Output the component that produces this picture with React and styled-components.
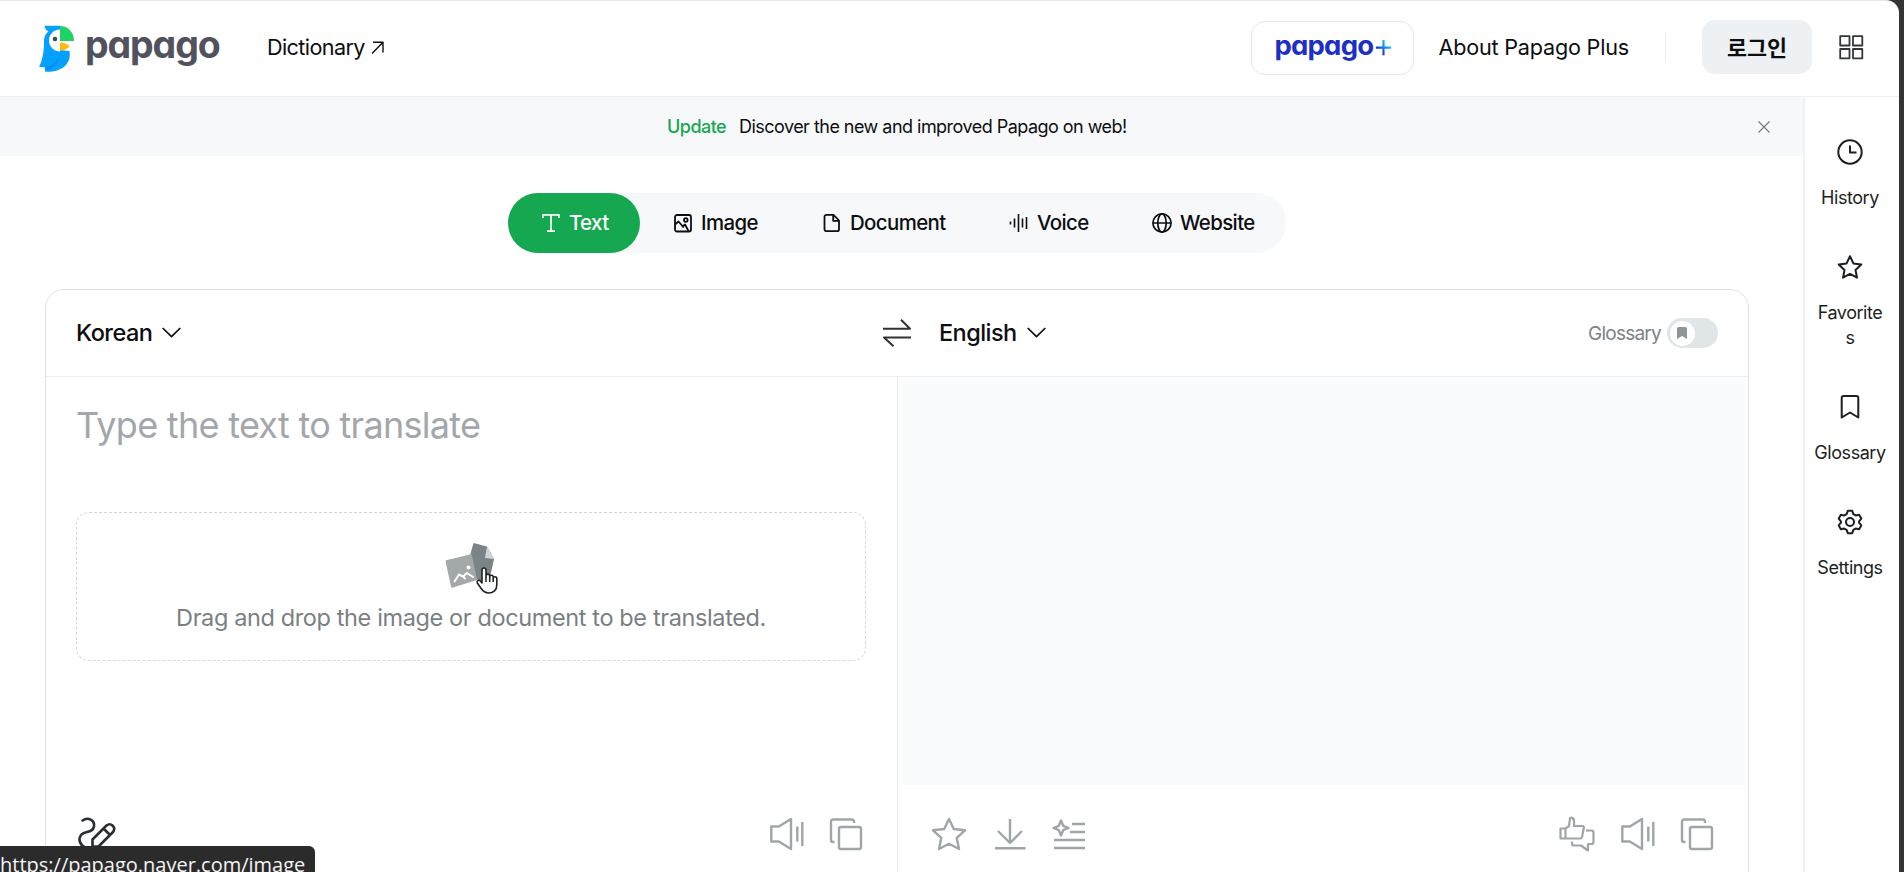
import React from "react";
import styled, { createGlobalStyle, css } from "styled-components";

const GlobalStyle = createGlobalStyle`
	* {
		box-sizing: border-box;
	}
	body {
		margin: 0;
		overflow: hidden;
		background: #343434;
		color: #0c0e10;
		font-family: Inter, "Noto Sans CJK KR", sans-serif;
	}
	button {
		font: inherit;
		color: inherit;
		border: 0;
		padding: 0;
		background: none;
		cursor: pointer;
	}
	svg {
		display: block;
		flex: none;
		overflow: visible;
	}
`;

const Window = styled.div`
	width: 1899px;
	height: 872px;
	overflow: hidden;
	display: flex;
	flex-direction: column;
	background: #fff;
	border-top: 1px solid #e6e6e6;
	border-radius: 0 13px 0 0;
`;

const Header = styled.header`
	flex: none;
	height: 96px;
	display: flex;
	align-items: center;
	padding: 0 35px 3px 39px;
	border-bottom: 1px solid #eff0f2;
`;

const Logo = styled.a`
	display: flex;
	align-items: center;
	width: 228px;
	gap: 11px;
	padding-top: 2px;
`;

const Wordmark = styled.span`
	font-weight: 700;
	font-size: ${props => props.size}px;
	letter-spacing: ${props => props.spacing}px;
	line-height: 1;
	color: ${props => props.color};
	font-feature-settings: "cv11";
	white-space: nowrap;
	margin-top: ${props => props.shift || 0}px;
`;

const NavLink = styled.a`
	display: flex;
	align-items: center;
	gap: 6px;
	font-size: 21.6px;
	letter-spacing: ${props => props.spacing}px;
	white-space: nowrap;
`;

const HeaderRight = styled.div`
	margin-left: auto;
	display: flex;
	align-items: center;
`;

const PlusButton = styled.button`
	width: 163px;
	height: 54px;
	margin: 2px 24px 0 0;
	display: flex;
	align-items: center;
	padding-left: 22px;
	gap: 2px;
	border: 1px solid #e3e5e8;
	border-radius: 14px;
`;

const Divider = styled.span`
	width: 1px;
	height: 31px;
	margin: 0 36px;
	background: #eceef0;
`;

const LoginButton = styled.button`
	width: 110px;
	height: 54px;
	margin-right: 27px;
	padding-bottom: 2px;
	border-radius: 13px;
	background: #eef1f4;
	font-family: "Noto Sans CJK KR", sans-serif;
	font-weight: 700;
	font-size: 21.8px;
`;

const Body = styled.div`
	flex: 1;
	min-height: 0;
	display: flex;
`;

const Main = styled.main`
	width: 1803px;
	display: flex;
	flex-direction: column;
`;

const Banner = styled.div`
	flex: none;
	height: 59px;
	display: flex;
	align-items: center;
	padding: 0 33px 0 667px;
	background: #f6f8fa;
	font-size: 18px;
	letter-spacing: -0.53px;
	white-space: nowrap;
`;

const Update = styled.strong`
	font-weight: 500;
	width: 72px;
	color: #18a651;
`;

const CloseButton = styled.button`
	margin-left: auto;
`;

const Tabs = styled.nav`
	flex: none;
	align-self: flex-start;
	margin: 37px 0 36px 508px;
	height: 60px;
	display: flex;
	border-radius: 30px;
	background: #f6f8fa;
`;

const Tab = styled.button`
	width: ${props => props.width}px;
	display: flex;
	align-items: center;
	padding: 0 0 1px 33px;
	gap: 8px;
	border-radius: 30px;
	font-weight: 500;
	font-size: 20.4px;
	letter-spacing: -0.6px;
	white-space: nowrap;
	${props =>
		props.active &&
		css`
			background: #15a851;
			color: #fff;
		`}
`;

const Card = styled.section`
	flex: none;
	width: 1704px;
	height: 620px;
	margin-left: 45px;
	border: 1px solid #e0e3e5;
	border-radius: 19px;
	overflow: hidden;
`;

const LangBar = styled.div`
	height: 87px;
	display: flex;
	align-items: center;
	padding: 0 30px;
	border-bottom: 1px solid #eceeef;
`;

const LangButton = styled.button`
	display: flex;
	align-items: center;
	width: ${props => props.width}px;
	padding-bottom: 1px;
	gap: 10px;
	font-weight: 500;
	font-size: 23.5px;
	letter-spacing: -0.55px;
`;

const SwapButton = styled.button`
	width: 56px;
`;

const GlossaryLabel = styled.span`
	margin-left: auto;
	margin-right: 6px;
	font-size: 19px;
	letter-spacing: -0.75px;
	color: #7c8287;
`;

const Toggle = styled.button`
	width: 51px;
	height: 30px;
	padding: 2.5px;
	border-radius: 15px;
	background: #e0e5e8;
`;

const Knob = styled.span`
	width: 25px;
	height: 25px;
	display: flex;
	align-items: center;
	justify-content: center;
	border-radius: 50%;
	background: #fff;
`;

const Panes = styled.div`
	display: flex;
	height: 532px;
`;

const Pane = styled.div`
	width: 851px;
	display: flex;
	flex-direction: column;
	border-left: ${props => (props.target ? "1px solid #e8eaec" : "0")};
`;

const PaneText = styled.div`
	height: 408px;
	margin: ${props => (props.target ? "0 3px" : "0")};
	padding: ${props => (props.target ? "0" : "24px 31px 0 30px")};
	background: ${props => (props.target ? "#fafbfd" : "#fff")};
`;

const Placeholder = styled.p`
	margin: 0 0 63px;
	font-size: 36px;
	line-height: 48px;
	letter-spacing: -0.71px;
	color: #a1a7aa;
	white-space: nowrap;
`;

const DropZone = styled.div`
	width: 790px;
	height: 149px;
	display: flex;
	flex-direction: column;
	align-items: center;
	padding-top: 30px;
	border: 1px dashed #d2d6d9;
	border-radius: 13px;
`;

const DropIcon = styled.div`
	position: relative;
	width: 50px;
	height: 46px;
	margin-right: 3px;
`;

const Pointer = styled.div`
	position: absolute;
	left: 31px;
	top: 24px;
`;

const DropText = styled.p`
	margin: 13px 0 0;
	font-size: 23.5px;
	line-height: 32px;
	letter-spacing: -0.38px;
	color: #797f83;
	white-space: nowrap;
`;

const Tools = styled.div`
	height: 98px;
	display: flex;
	gap: 25.5px;
	padding: 32px 35px 0 ${props => (props.target ? 33 : 30)}px;
	color: #a0a5a8;
`;

const Spacer = styled.span`
	flex: 1;
`;

const Sidebar = styled.aside`
	width: 96px;
	display: flex;
	flex-direction: column;
	align-items: center;
	gap: 41.5px;
	padding-top: 40px;
	padding-right: 4px;
	border-left: 2px solid #f0f1f3;
`;

const SideItem = styled.button`
	width: 72px;
	display: flex;
	flex-direction: column;
	align-items: center;
	gap: 18px;
	padding-bottom: 0.5px;
	font-size: 18px;
	line-height: 25px;
	letter-spacing: -0.45px;
	word-break: break-all;
	color: #1c1f22;
`;

const StatusBar = styled.div`
	position: fixed;
	left: 0;
	bottom: -8px;
	width: 315px;
	height: 34px;
	border-radius: 0 6px 0 0;
	background: #2b2b2b;
	color: #f4f4f4;
	font-family: "Open Sans", "Noto Sans", sans-serif;
	font-size: 20px;
	line-height: 38px;
	white-space: nowrap;
`;

const Icon = ({ w, h = w, stroke = 2, color = "currentColor", round, children }) => (
	<svg
		width={w}
		height={h}
		viewBox={`0 0 ${w} ${h}`}
		fill="none"
		stroke={color}
		strokeWidth={stroke}
		strokeLinecap={round ? "round" : "butt"}
		strokeLinejoin="round"
	>
		{children}
	</svg>
);

const Parrot = () => (
	<svg width="35" height="47" viewBox="0 0 35 47">
		<path
			fill="#05a0fb"
			d="M5.5.8H21V25l9.500 1C31.500 32 30 37 26 41c-5 4.400-11 6-20 5.700L6.300 42.200.2 42C3.500 34 5 27 5 17 5 11 7 8.500 9.500 6.500 7 5.500 6 3.500 5.500.8Z"
		/>
		<path fill="#078cf5" d="M6.300 42.200C13 41 18 37 20 32c-1 7-6 12-14 13Z" />
		<path fill="#fff" d="M21 4.500A11 11 0 0 0 21 26.500Z" />
		<circle cx="16" cy="14" r="2.300" fill="#454554" />
		<path fill="#1fd265" d="M21 1C29 1 35 7 35 16H21Z" />
		<path fill="#fff" d="M21 16h14l-4.500 5.500H21Z" />
		<path fill="#ffb90f" d="M21 17.500c4 0 8 1.500 9.500 4-2 2.700-6 4-9.500 4Z" />
	</svg>
);

const Chevron = () => (
	<Icon w={19} h={11} stroke={1.7}>
		<path d="M.7 1 9.500 9.700 18.300 1" />
	</Icon>
);

const Speaker = () => (
	<Icon w={35} h={34} stroke={2.4}>
		<path d="M1.300 9.500h7.500L21 2v30L8.800 24.500H1.300ZM27.300 9.500v15M32.300 5v24" />
	</Icon>
);

const Copy = () => (
	<Icon w={32} h={34} stroke={2.4}>
		<path d="M24 6V4.500A2 2 0 0 0 22 2.500H3a2 2 0 0 0-2 2V23a2 2 0 0 0 2 2h1.500" />
		<rect x="9" y="10" width="22" height="22" rx="2" />
	</Icon>
);

const tabs = [
	{
		label: "Text",
		width: 132,
		icon: (
			<Icon w={20} stroke={1.7}>
				<path d="M2 5V1.800h16V5M10 1.800v16.400M6 18.200h8" />
			</Icon>
		)
	},
	{
		label: "Image",
		width: 149,
		icon: (
			<Icon w={20} stroke={1.8}>
				<rect x="2" y="2" width="16" height="16.500" rx="2" />
				<circle cx="12.800" cy="7" r="1.800" />
				<path d="M2 11.500 5.500 8.500l5.300 6M9 14l3-2.500 3.500 6.500" />
			</Icon>
		)
	},
	{
		label: "Document",
		width: 187,
		icon: (
			<Icon w={20} stroke={1.8}>
				<path d="M4 1.800h7.500L17 7.500V16.200a2 2 0 0 1-2 2H4.500a2 2 0 0 1-2-2V3.800a2 2 0 0 1 2-2M11.200 2v5.800H17" />
			</Icon>
		)
	},
	{
		label: "Voice",
		width: 143,
		icon: (
			<Icon w={20} stroke={1.6}>
				<path d="M1.500 8.500v3M5.500 5.500v9M9.500 1v18M13.500 5.500v9M17.500 4v12" />
			</Icon>
		)
	},
	{
		label: "Website",
		width: 167,
		icon: (
			<Icon w={20} stroke={1.7}>
				<circle cx="10" cy="10" r="9.100" />
				<ellipse cx="10" cy="10" rx="4.200" ry="9.100" />
				<path d="M1 10h18" />
			</Icon>
		)
	}
];

const sideItems = [
	{
		label: "History",
		icon: (
			<Icon w={30}>
				<circle cx="15" cy="15" r="11.700" />
				<path d="M15 8.500V15.500H21.500" />
			</Icon>
		)
	},
	{
		label: "Favorites",
		icon: (
			<Icon w={30}>
				<path d="M15 4.200 18.400 11.400 26.300 12.400 20.500 17.900 22 25.700 15 21.900 8 25.700 9.500 17.900 3.700 12.400 11.600 11.400Z" />
			</Icon>
		)
	},
	{
		label: "Glossary",
		icon: (
			<Icon w={30}>
				<path d="M6.700 25.500V6a2 2 0 0 1 2-2H21.300a2 2 0 0 1 2 2V25.500L15 20.500Z" />
			</Icon>
		)
	},
	{
		label: "Settings",
		icon: (
			<Icon w={30}>
				<path d="M12.800 3.800h4.400l1.200 3.300 2.300 1.300 3.400-.6 2.200 3.800-2.200 2.700v1.400l2.200 2.700-2.200 3.800-3.400-.6-2.300 1.300-1.200 3.300h-4.400l-1.200-3.300-2.300-1.300-3.400.6-2.200-3.800 2.200-2.700v-1.400l-2.200-2.700 2.200-3.800 3.400.6 2.300-1.300Z" />
				<circle cx="15" cy="15" r="4" />
			</Icon>
		)
	}
];

const App = () => {
	return (
		<>
			<GlobalStyle />
			<Window>
				<Header>
					<Logo>
						<Parrot />
						<Wordmark size={37.5} spacing={-1.1} color="#52515e" shift={-7}>
							papago
						</Wordmark>
					</Logo>
					<NavLink spacing={-0.6}>
						Dictionary
						<Icon w={13} stroke={1.4}>
							<path d="M1 12.500 12 1.200M2 1.200h10v10.300" />
						</Icon>
					</NavLink>
					<HeaderRight>
						<PlusButton>
							<Wordmark size={27.5} spacing={-0.8} color="#1c2fc6" shift={-4}>
								papago
							</Wordmark>
							<svg width="17" height="17" viewBox="0 0 17 19">
								<defs>
									<linearGradient id="plus" x1="0" y1="1" x2="1" y2="0">
										<stop offset="0.250" stopColor="#1c2fd0" />
										<stop offset="0.700" stopColor="#12b4fa" />
									</linearGradient>
								</defs>
								<path fill="url(#plus)" d="M7.300 0h2.400v7.300H17v2.400H9.700V17H7.300V9.700H0V7.300h7.300Z" />
							</svg>
						</PlusButton>
						<NavLink spacing={-0.2}>About Papago Plus</NavLink>
						<Divider />
						<LoginButton>로그인</LoginButton>
						<Icon w={25} stroke={1.8} color="#33373a">
							<rect x="1.200" y="1.200" width="9.300" height="9.300" />
							<rect x="14" y="1.200" width="9.300" height="9.300" />
							<rect x="1.200" y="14" width="9.300" height="9.300" />
							<rect x="14" y="14" width="9.300" height="9.300" />
						</Icon>
					</HeaderRight>
				</Header>
				<Body>
					<Main>
						<Banner>
							<Update>Update</Update>
							<span>Discover the new and improved Papago on web!</span>
							<CloseButton>
								<Icon w={12} stroke={1.2} color="#777c80">
									<path d="M.5.5l11 11M11.500.5l-11 11" />
								</Icon>
							</CloseButton>
						</Banner>
						<Tabs>
							{tabs.map((tab, i) => (
								<Tab key={tab.label} width={tab.width} active={i === 0}>
									{tab.icon}
									{tab.label}
								</Tab>
							))}
						</Tabs>
						<Card>
							<LangBar>
								<LangButton width={807}>
									Korean
									<Chevron />
								</LangButton>
								<SwapButton>
									<Icon w={28} h={28} color="#303335">
										<path d="M0 9.700h27L18 .7M28 18.500H1l9.500 8.800" />
									</Icon>
								</SwapButton>
								<LangButton width={150}>
									English
									<Chevron />
								</LangButton>
								<GlossaryLabel>Glossary</GlossaryLabel>
								<Toggle>
									<Knob>
										<svg width="10" height="12" viewBox="0 0 10 12">
											<path fill="#8f9699" d="M1.500 0h7A1.500 1.500 0 0 1 10 1.500V12L5 9 0 12V1.500A1.500 1.500 0 0 1 1.500 0Z" />
										</svg>
									</Knob>
								</Toggle>
							</LangBar>
							<Panes>
								<Pane>
									<PaneText>
										<Placeholder>Type the text to translate</Placeholder>
										<DropZone>
											<DropIcon>
												<svg width="50" height="46" viewBox="0 0 50 46">
													<path fill="#7b8386" d="M28.500 0 42 3.500 49 16 44 39 22 34 24 16Z" />
													<path fill="#d0d4d6" d="M42 3.500 49 16 40 15Z" />
													<path fill="#a3a8aa" d="M2 17 25 11.500a1.500 1.500 0 0 1 2 1L32 37 8 44.500a1.500 1.500 0 0 1-2-1L.7 19a1.500 1.500 0 0 1 1.300-2Z" />
													<path
														d="M9.500 38.500 14 31.500l4 2 4-3.500 6 4M17.500 33l2.500 2.500"
														fill="none"
														stroke="#fff"
														strokeWidth="2"
														strokeLinecap="round"
													/>
													<circle cx="23.500" cy="24.500" r="2" fill="#fff" />
												</svg>
												<Pointer>
													<svg width="22" height="27" viewBox="0 0 22 27">
														<path
															d="M6 16V3a2 2 0 0 1 4 0v7.500V9a1.800 1.800 0 0 1 3.700 0v2-1a1.700 1.700 0 0 1 3.500 0v2-.5a1.700 1.700 0 0 1 3.600 0V18c0 5-3.500 8-8 8-4 0-6-2-8-5L1.300 16c-1-2 1.300-3.800 2.900-2.200Z"
															fill="#fff"
															stroke="#1f2326"
															strokeWidth="1.600"
															strokeLinejoin="round"
														/>
														<path d="M10 10v5M13.700 11v4M17.200 12v3" stroke="#1f2326" strokeWidth="1.500" />
													</svg>
												</Pointer>
											</DropIcon>
											<DropText>Drag and drop the image or document to be translated.</DropText>
										</DropZone>
									</PaneText>
									<Tools>
										<Icon w={40} h={34} stroke={2.6} color="#2b2e31" round>
											<path d="M6.500 3.500C12-.5 19 3 18 9.500 17 16 9 14 5.500 17.500 1.500 22 4 28 9 30.500" />
											<path d="M16.500 29.500V22.500L30.500 8.500c4.500-3.500 10 2 6.500 6.500L22.500 29.500ZM27.500 11.500l6.500 6.500" />
										</Icon>
										<Spacer />
										<Speaker />
										<Copy />
									</Tools>
								</Pane>
								<Pane target>
									<PaneText target />
									<Tools target>
										<Icon w={36} h={34} stroke={2.4}>
											<path d="M18 2 22.800 12 34 13.300 25.700 20.800 28 32 18 26.800 8 32 10.300 20.800 2 13.300 13.200 12Z" />
										</Icon>
										<Icon w={34} h={34} stroke={2.4}>
											<path d="M17 2v24M5 14 17 26 29 14M2 31.300h30.500" />
										</Icon>
										<Icon w={34} h={34} stroke={2.4}>
											<path d="M20 7h13M18 15h15M2 23h31M2 31h31" />
											<path d="M9 3.500 11.200 8.800 16.500 11 11.200 13.200 9 18.500 6.800 13.200 1.500 11 6.800 8.800Z" />
										</Icon>
										<Spacer />
										<Icon w={36} h={34} stroke={2.2}>
											<path d="M1.500 11.500h5V21.500h-5ZM6.500 11.500 10 9 11 1.500C11 0 15 .5 15 3.500V9h8.500a1.500 1.500 0 0 1 1.300 2l-1.800 9a2 2 0 0 1-2 1.500H6.500" />
											<path d="M27 13.500h5.500a2 2 0 0 1 2 2v9.500a2 2 0 0 1-2 2h-3.500V33.500L22 28.500H15a2 2 0 0 1-2-2V24.500" />
										</Icon>
										<Speaker />
										<Copy />
									</Tools>
								</Pane>
							</Panes>
						</Card>
					</Main>
					<Sidebar>
						{sideItems.map(item => (
							<SideItem key={item.label}>
								{item.icon}
								{item.label}
							</SideItem>
						))}
					</Sidebar>
				</Body>
			</Window>
			<StatusBar>https://papago.naver.com/image</StatusBar>
		</>
	);
};

export default App;
